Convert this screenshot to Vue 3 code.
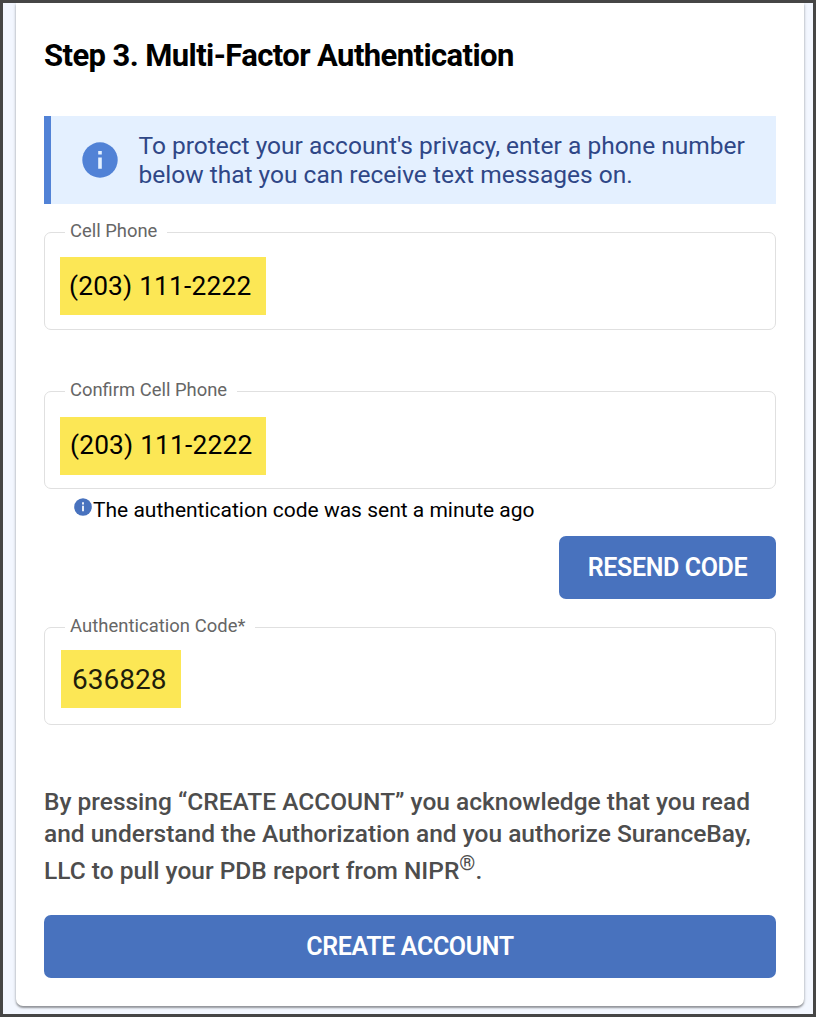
<template>
  <div class="page">
    <div class="card">
      <h2 class="title"><span>Step 3. Multi-Factor Authentication</span></h2>

      <!-- info banner -->
      <div class="notice">
        <svg class="notice-icon" viewBox="0 0 36 36">
          <circle cx="18" cy="18" r="17.7" fill="#5182d6" />
          <path d="M16.2 9h3.6v3.6h-3.6zM16.2 15.6h3.6v11.2h-3.6z" fill="#e3f0ff" />
        </svg>
        <div class="notice-text">
          <div class="line">To protect your account's privacy, enter a phone number</div>
          <div class="line">below that you can receive text messages on.</div>
        </div>
      </div>

      <div class="field" v-for="f in phones" :key="f.id" :class="f.id">
        <label class="label" :for="f.id">{{ f.label }}</label>
        <div class="value" :id="f.id"><span>{{ f.value }}</span></div>
      </div>

      <div class="helper">
        <svg class="helper-icon" viewBox="0 0 18 18">
          <circle cx="9" cy="9" r="8.8" fill="#4872be" />
          <path d="M8 4.3h2v2.2H8zM8 7.7h2v5.6H8z" fill="#e6ecf7" />
        </svg>
        <span class="helper-text">The authentication code was sent a minute ago</span>
      </div>

      <button class="btn resend" type="button"><span>RESEND CODE</span></button>

      <div class="field code">
        <label class="label" for="code">Authentication Code*</label>
        <div class="value" id="code"><span>{{ code }}</span></div>
      </div>

      <div class="terms">
        <div class="line">By pressing “CREATE ACCOUNT” you acknowledge that you read</div>
        <div class="line">and understand the Authorization and you authorize SuranceBay,</div>
        <div class="line last">LLC to pull your PDB report from NIPR<sup>®</sup>.</div>
      </div>

      <button class="btn create" type="button"><span>CREATE ACCOUNT</span></button>
    </div>
  </div>
</template>

<script setup>
import { ref } from "vue";

const phones = ref([
  { id: "cell", label: "Cell Phone", value: "(203) 111-2222" },
  { id: "confirm", label: "Confirm Cell Phone", value: "(203) 111-2222" },
]);
const code = ref("636828");
</script>

<style>
body {
  margin: 0;
}
</style>

<style scoped>
.page {
  box-sizing: border-box;
  width: 816px;
  height: 1017px;
  padding: 0 9px 8px 13px;
  border: 3px solid #464646;
  background: #f3f7ff;
  overflow: hidden;
  font-family: Roboto, "Liberation Sans", sans-serif;
}
.card {
  box-sizing: border-box;
  height: 1003px;
  padding: 0 28px 28px;
  background: #fff;
  border-radius: 0 0 7px 7px;
  box-shadow: 0 2px 2px rgba(0, 0, 0, 0.36), 0 0 4px rgba(0, 0, 0, 0.14);
  display: flex;
  flex-direction: column;
}
.title {
  margin: 35px 0 0;
  height: 36px;
  line-height: 36px;
  font-size: 31px;
  font-weight: 700;
  letter-spacing: -0.59px;
  color: #000;
  white-space: nowrap;
}
.line {
  white-space: nowrap;
}

.notice {
  box-sizing: border-box;
  margin-top: 42px;
  height: 88px;
  padding-left: 31px;
  border-left: 7px solid #5182d6;
  background: #e4f0ff;
  display: flex;
  align-items: center;
  gap: 20.5px;
}
.notice-icon {
  width: 36px;
  height: 36px;
}
.notice-text {
  font-size: 24.5px;
  line-height: 29px;
  color: #2f4787;
}

.field {
  box-sizing: border-box;
  position: relative;
  height: 98px;
  margin-top: 28px;
  padding: 24px 15px 0;
  border: 1px solid #e0e0e0;
  border-radius: 7px;
}
.confirm {
  margin-top: 61px;
  padding-top: 25px;
}
.code {
  padding: 22px 16px 0;
}
.label {
  position: absolute;
  top: -13px;
  left: 20px;
  padding: 0 10px 0 5px;
  background: #fff;
  font-size: 18.4px;
  line-height: 22px;
  color: #666;
  white-space: nowrap;
}
.code .label {
  letter-spacing: 0.05px;
}
.value {
  box-sizing: border-box;
  width: 206px;
  height: 58px;
  padding-left: 9px;
  background: #fce755;
  font-size: 26.25px;
  line-height: 58px;
  letter-spacing: 0.21px;
  color: #000;
  white-space: nowrap;
}
.confirm .value {
  padding-left: 10px;
  line-height: 56px;
}
.code .value {
  width: 120px;
  padding-left: 11px;
  font-size: 28px;
  line-height: 60px;
  letter-spacing: 0;
  color: #1f1d0b;
}

.helper {
  height: 47px;
  padding-left: 29.5px;
  display: flex;
  align-items: flex-start;
  gap: 1.5px;
}
.helper-icon {
  width: 18px;
  height: 18px;
  margin-top: 9px;
}
.helper-text {
  margin-top: 8px;
  font-size: 21px;
  line-height: 26px;
  color: #000;
  white-space: nowrap;
}

.btn {
  flex: none;
  height: 63px;
  padding: 1px 0 0;
  border: 0;
  border-radius: 7px;
  background: #4872be;
  color: #fff;
  font-family: inherit;
  font-size: 25px;
  font-weight: 600;
  line-height: 62px;
  letter-spacing: -0.38px;
}
.resend {
  width: 217px;
  align-self: flex-end;
}
.terms {
  margin-top: 61px;
  height: 129px;
  font-size: 24.5px;
  line-height: 32px;
  font-weight: 500;
  color: #4d4d4d;
}
.last {
  margin-top: 5px;
}
.terms sup {
  font-size: 20.4px;
  line-height: 0;
  vertical-align: 9px;
  font-weight: 400;
}
</style>
